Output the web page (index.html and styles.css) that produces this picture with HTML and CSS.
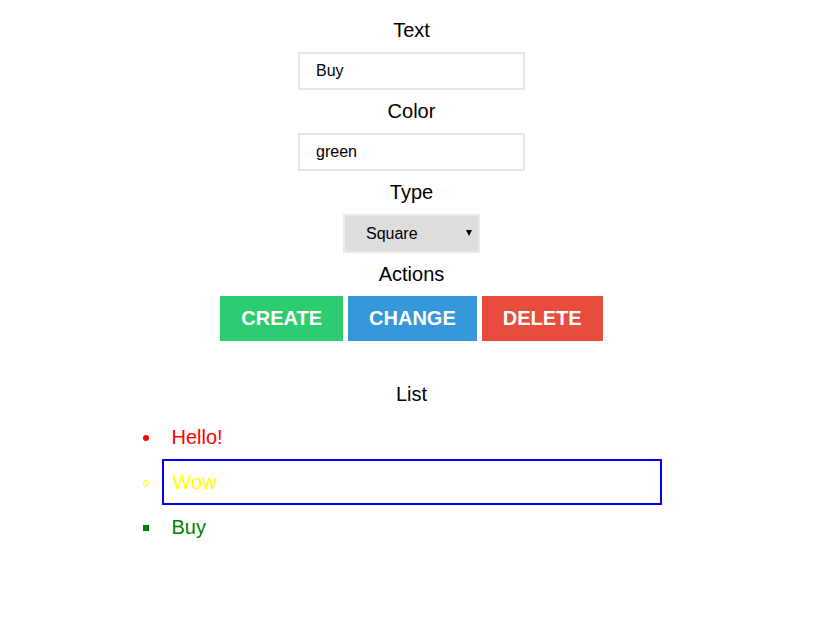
FILE: index.html
```html
<!DOCTYPE html>
<html>
<head>
<meta charset="utf-8">
<link rel="stylesheet" href="styles.css">
</head>
<body>
<div class="app">
  <div class="field">
    <label class="lbl">Text</label>
    <input class="inp" type="text" value="Buy">
  </div>
  <div class="field">
    <label class="lbl">Color</label>
    <input class="inp" type="text" value="green">
  </div>
  <div class="field">
    <label class="lbl">Type</label>
    <div class="sel-wrap">
      <select class="sel">
        <option>Square</option>
        <option>Circle</option>
        <option>Disc</option>
      </select>
    </div>
  </div>
  <div class="field">
    <label class="lbl">Actions</label>
    <div class="actions">
      <button class="btn btn-create">CREATE</button>
      <button class="btn btn-change">CHANGE</button>
      <button class="btn btn-delete">DELETE</button>
    </div>
  </div>
  <div class="field list-field">
    <label class="lbl">List</label>
    <ul class="items">
      <li class="item item-disc red">Hello!</li>
      <li class="item item-circle yellow selected">Wow</li>
      <li class="item item-square green">Buy</li>
    </ul>
  </div>
</div>
</body>
</html>
```

FILE: styles.css
```css
html, body {
  margin: 0;
  padding: 0;
  background: #ffffff;
}
body {
  font-family: "Liberation Sans", Arial, sans-serif;
  color: #000;
}
.app {
  width: 807px;
  padding: 9px 8px 0 8px;
}
.lbl {
  display: block;
  font-size: 20px;
  line-height: 23px;
  text-align: center;
  margin: 10px 0;
}
.inp {
  display: block;
  box-sizing: border-box;
  margin: 0 auto;
  width: 227px;
  height: 38px;
  border: 2px solid #e4e7ea;
  padding: 0 16px;
  font-family: "Liberation Sans", Arial, sans-serif;
  font-size: 16px;
  color: #000;
  outline: none;
  background: #fff;
}
.sel-wrap {
  position: relative;
  width: 137px;
  margin: 0 auto;
}
.sel {
  display: block;
  box-sizing: border-box;
  width: 137px;
  height: 39px;
  border: 2px solid #e8eaec;
  border-radius: 0;
  background: #dddddd;
  padding: 0 0 0 21px;
  font-family: "Liberation Sans", Arial, sans-serif;
  font-size: 16px;
  color: #000;
  -webkit-appearance: none;
  appearance: none;
  outline: none;
}
.sel-wrap::after {
  content: "";
  position: absolute;
  right: 8px;
  top: 16px;
  width: 0;
  height: 0;
  border-left: 3px solid transparent;
  border-right: 3px solid transparent;
  border-top: 6px solid #000;
  pointer-events: none;
}
.actions {
  display: flex;
  justify-content: center;
  gap: 5px;
}
.btn {
  height: 45px;
  padding: 0 21px;
  border: none;
  border-radius: 0;
  font-family: "Liberation Sans", Arial, sans-serif;
  font-weight: bold;
  font-size: 20px;
  color: #fff;
}
.btn-create { background: #2ecc71; }
.btn-change { background: #3498db; }
.btn-delete { background: #e74c3c; }
.list-field .lbl {
  margin-top: 42px;
  margin-bottom: 9px;
}
.items {
  width: 500px;
  margin: 0 auto;
  padding: 0;
  list-style: none;
}
.item {
  position: relative;
  border: 2px solid transparent;
  padding: 9px 8px 8px 8px;
  font-size: 20px;
  line-height: 23px;
}
.item::before {
  content: "";
  position: absolute;
  left: -21px;
  top: 18px;
  width: 6px;
  height: 6px;
  box-sizing: border-box;
}
.item-disc::before {
  border-radius: 50%;
  background: currentColor;
}
.item-circle::before {
  border-radius: 50%;
  border: 1px solid currentColor;
}
.item-square::before {
  background: currentColor;
}
.selected {
  border-color: #0000ff;
  padding: 10px 8px 9px 9px;
}
.selected::before {
  top: 19px;
}
.red { color: #ff0000; }
.yellow { color: #ffff00; }
.green { color: #008000; }
```
